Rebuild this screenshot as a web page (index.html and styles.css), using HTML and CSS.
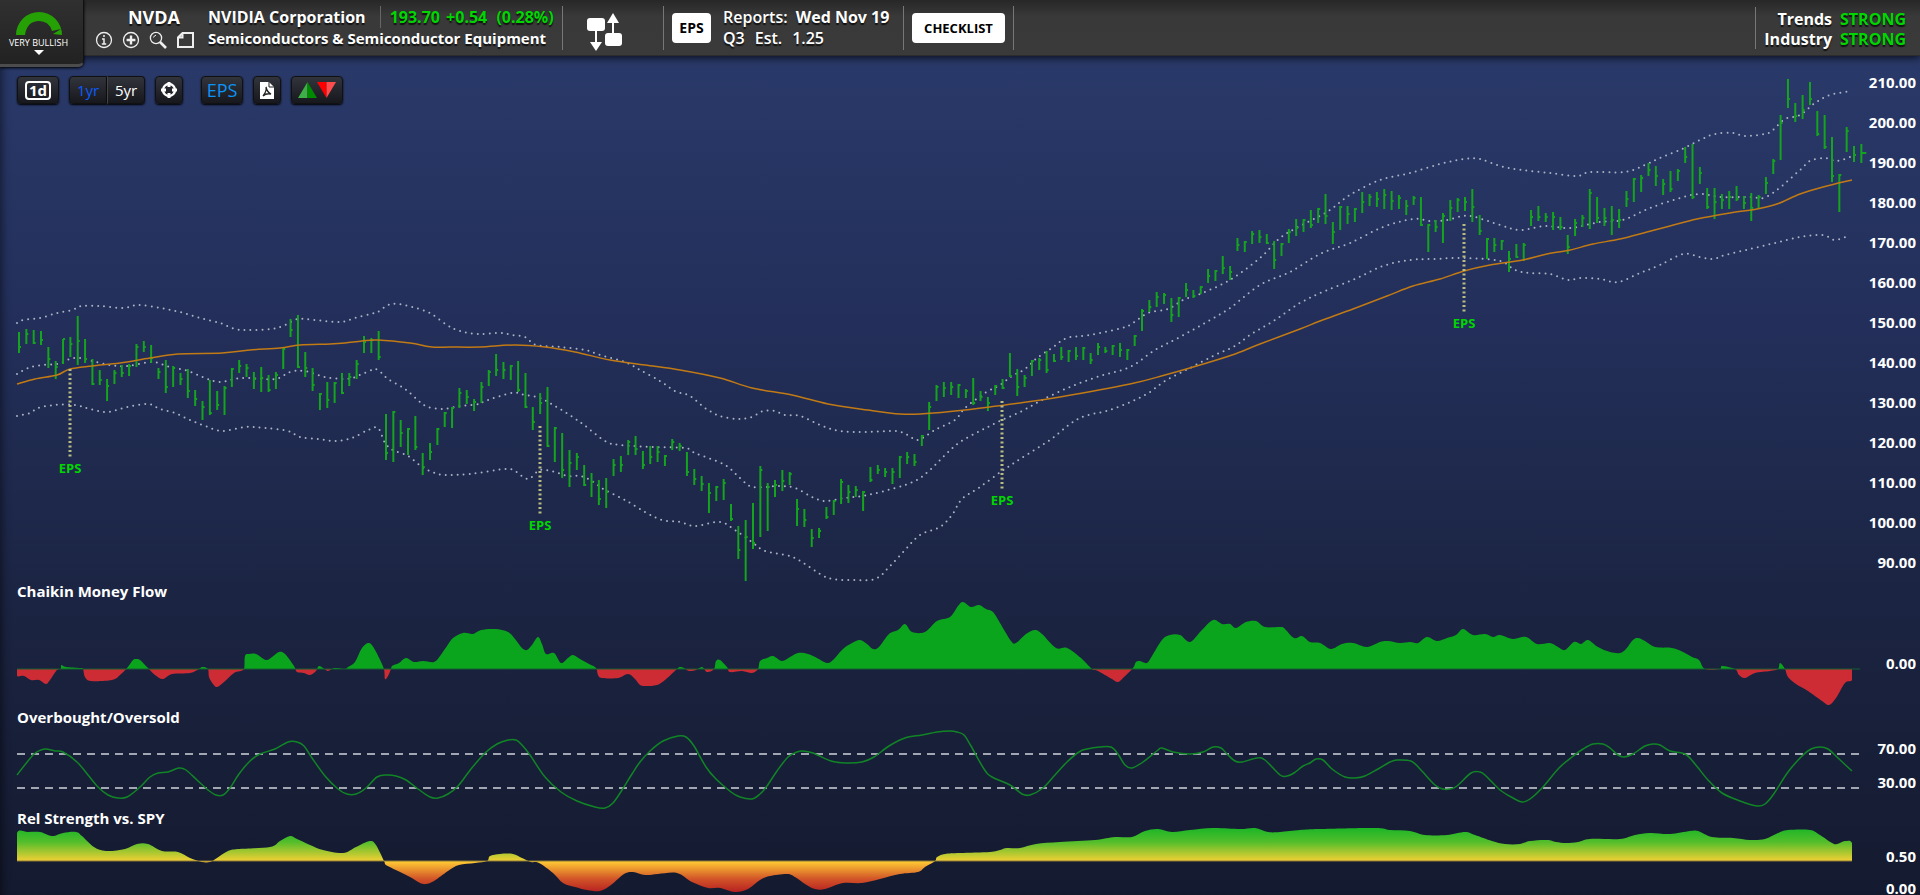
FILE: index.html
```html
<!DOCTYPE html>
<html lang="en">
<head>
  <meta charset="UTF-8" />
  <meta name="viewport" content="width=device-width, initial-scale=1.0"/>
  <title>NVDA - NVIDIA Corporation</title>
  <link rel="stylesheet" href="styles.css">
</head>
<body>
<header class="topbar">
  <button class="rating" type="button">
    <svg width="46" height="24" viewBox="0 0 46 24">
      <path d="M0 23A23 23 0 0 1 46 23L37 22L45 17L36 19Q33 9 23 9Q11 9 9 23Z" fill="#25a005"/>
    </svg>
    <span>VERY BULLISH</span>
    <i class="caret"></i>
  </button>
  <div class="symbol">
    <h1>NVDA</h1>
    <div class="symbol-icons">
      <button type="button" aria-label="Info">
        <svg viewBox="0 0 18 18"><circle cx="9" cy="9" r="7.5" stroke-width="1.3"/><path d="M9 4v2M7 8h2v5M6.800 13h4.400"/></svg>
      </button>
      <button type="button" aria-label="Add">
        <svg viewBox="0 0 18 18"><circle cx="9" cy="9" r="7.5" stroke-width="1.3"/><path d="M9 4.600v8.800M4.600 9h8.800" stroke-width="2.4"/></svg>
      </button>
      <button type="button" aria-label="Search">
        <svg viewBox="0 0 18 18"><circle cx="7" cy="7" r="5.6" stroke-width="1.3"/><path d="M4.500 6.500Q5 4.600 7 4.200" stroke-width="1"/><path d="M11 11l6 6" stroke-width="2.6"/></svg>
      </button>
      <button type="button" aria-label="Notes">
        <svg viewBox="0 0 18 18"><path d="M6.500 2H17v14H2V6.500zM6.500 2v4.500H2" stroke-width="2"/></svg>
      </button>
    </div>
  </div>
  <div class="company">
    <div class="line"><span class="name">NVIDIA Corporation</span><span class="price">193.70 <b>+0.54</b> (0.28%)</span></div>
    <div class="industry">Semiconductors &amp; Semiconductor Equipment</div>
  </div>
  <button class="swap" type="button" aria-label="Compare">
    <svg width="36" height="38" viewBox="0 0 36 38" fill="#fff">
      <rect x="0" y="5" width="18" height="13" rx="3"/><rect x="18" y="20" width="17" height="13" rx="3"/>
      <path d="M8 17h2v12h5l-6 9-6-9h5zM25 21h2V10h5L26 0l-6 10h5z"/>
    </svg>
  </button>
  <div class="reports">
    <button class="white-btn eps" type="button">EPS</button>
    <div>
      <div>Reports: <b>Wed Nov 19</b></div>
      <div class="est"><span>Q3</span><span>Est.</span><span>1.25</span></div>
    </div>
  </div>
  <div class="checklist"><button class="white-btn" type="button">CHECKLIST</button></div>
  <div class="strength">
    <div class="labels"><span>Trends</span><span>Industry</span></div>
    <div class="values"><span>STRONG</span><span>STRONG</span></div>
  </div>
</header>

<main class="charts">
  <div class="toolbar">
    <button type="button"><span class="boxed">1d</span></button>
    <div class="group">
      <button type="button" class="active">1yr</button>
      <button type="button">5yr</button>
    </div>
    <button type="button" class="small" aria-label="Crosshair">
      <svg width="18" height="18" viewBox="0 0 18 18"><circle cx="9" cy="9" r="6" fill="none" stroke="#fff" stroke-width="2.4"/><path d="M9 1v5M9 12v5M1 9h5M12 9h5" stroke="#fff" stroke-width="3"/></svg>
    </button>
    <button type="button" class="eps-toggle">EPS</button>
    <button type="button" class="small" aria-label="PDF">
      <svg width="14" height="17" viewBox="0 0 14 17"><path d="M0 0h9l5 5v12H0z" fill="#fff"/><path d="M9 0v5h5" fill="none" stroke="#222" stroke-width="1"/><path d="M3 14Q7 9 6 5Q7 10 11 12Q6 11 3 14" fill="none" stroke="#222" stroke-width="1.3"/></svg>
    </button>
    <button type="button" class="arrows" aria-label="Buy and sell signals">
      <svg width="38" height="16" viewBox="0 0 38 16"><path d="M9.500 0v16H0z" fill="#3fae49"/><path d="M9.500 0v16H19z" fill="#008a00"/><path d="M19 0h9.500v16z" fill="#f00"/><path d="M28.500 0H38l-9.500 16z" fill="#ff4c4c"/></svg>
    </button>
  </div>

  <section>
    <svg class="plot" id="price" viewBox="0 56 1920 526"></svg>
  </section>
  <section>
    <h2>Chaikin Money Flow</h2>
    <svg class="plot" id="flow" viewBox="0 602 1920 106">
      <linearGradient id="flow-fill" gradientUnits="userSpaceOnUse" x1="0" y1="602" x2="0" y2="736">
        <stop offset="0.5" stop-color="#0aa51c"/><stop offset="0.5" stop-color="#ce2c35"/>
      </linearGradient>
    </svg>
  </section>
  <section>
    <h2>Overbought/Oversold</h2>
    <svg class="plot" id="stoch" viewBox="0 728 1920 81"></svg>
  </section>
  <section>
    <h2>Rel Strength vs. SPY</h2>
    <svg class="plot" id="rel" viewBox="0 829 1920 66">
      <linearGradient id="rel-fill" gradientUnits="userSpaceOnUse" x1="0" y1="829" x2="0" y2="893">
        <stop offset="0" stop-color="#1fb628"/><stop offset="0.2" stop-color="#52bd2b"/>
        <stop offset="0.5" stop-color="#f2d035"/><stop offset="0.52" stop-color="#fcc433"/>
        <stop offset="0.78" stop-color="#d25428"/><stop offset="1" stop-color="#b51d20"/>
      </linearGradient>
    </svg>
  </section>
</main>

<script>
  // high, low, close of each day, one bar after another
  const bars = `332,353,347 329,344,334 330,344,343 331,345,340 347,368,359 361,379,367 339,364,339 337,357,344 316,365,341 339,363,359
    359,385,384 370,385,380 379,401,386 370,384,373 365,377,373 364,376,366 344,367,347 341,352,347 345,363,358 368,379,372
    360,393,387 366,387,368 373,385,379 369,398,391 390,406,399 401,420,407 380,415,413 391,410,405 386,415,388 368,387,369
    360,373,366 364,377,368 372,389,379 367,392,378 375,392,390 372,389,375 347,369,349 319,337,330 315,368,367 352,377,368
    368,391,385 393,410,394 382,408,400 382,403,383 373,394,393 373,386,377 360,379,364 336,353,342 338,353,340 331,360,357
    414,460,453 411,462,412 420,447,433 428,455,429 416,450,447 453,475,467 443,460,452 428,445,429 412,427,413 407,428,408
    388,408,393 390,404,397 399,411,402 382,403,387 370,386,372 354,376,370 362,379,370 365,380,366 361,392,390 373,408,407
    407,430,422 393,414,403 387,447,446 427,462,428 433,478,470 450,487,463 453,470,457 465,486,485 473,497,482 480,505,499
    478,508,492 459,476,465 456,472,465 440,455,442 436,455,449 451,469,465 446,464,457 446,462,452 455,466,456 439,450,442
    443,451,446 452,476,472 469,485,479 476,491,484 483,513,493 486,501,487 479,500,483 504,521,519 526,559,550 520,581,537
    503,549,543 466,537,470 483,531,487 480,497,485 470,491,481 472,485,474 499,526,509 509,527,520 529,547,538 528,538,531
    507,519,517 500,515,501 479,504,482 485,503,492 486,497,490 491,511,492 467,482,480 465,474,470 468,477,472 468,484,472
    456,478,457 452,464,457 454,466,462 435,446,436 402,430,407 385,401,387 382,397,388 382,395,387 384,398,385 389,398,391
    378,405,403 391,401,397 397,411,403 385,395,386 379,389,388 353,377,376 369,396,387 375,387,378 360,376,361 358,370,360
    351,373,370 354,362,361 347,360,357 350,362,351 347,360,356 347,360,348 353,364,360 343,355,347 347,353,351 345,355,346
    343,357,350 349,360,350 335,346,336 309,331,311 300,312,307 292,307,297 293,304,295 298,322,315 297,317,298 283,297,290
    290,298,296 286,294,287 269,283,276 270,281,271 256,274,268 266,280,272 238,251,245 241,252,242 231,244,234 230,243,237
    234,244,243 241,269,260 243,256,244 229,243,232 219,236,228 219,232,220 210,228,225 208,223,209 194,224,216 222,244,232
    206,230,207 206,224,214 208,222,209 192,213,202 194,206,197 192,207,199 189,209,195 191,210,201 195,209,198 200,215,206
    196,205,198 197,226,225 224,252,225 220,232,227 213,243,216 200,221,208 198,212,200 197,211,202 189,222,207 215,235,231
    238,259,239 238,252,245 240,250,241 251,272,259 244,258,257 243,261,245 210,226,217 206,221,217 213,222,217 212,230,217
    217,230,227 235,254,247 219,236,223 215,227,218 189,229,193 197,223,218 208,226,218 206,235,220 209,228,220 191,207,199
    178,202,179 175,192,178 163,176,170 166,186,176 179,195,184 171,192,189 169,181,171 147,163,157 144,199,197 167,184,173
    188,209,207 188,219,202 194,209,200 191,209,197 186,201,199 196,209,203 193,221,208 195,208,197 177,194,183 159,174,161
    115,160,123 79,108,99 103,122,116 95,119,110 82,105,99 111,136,134 115,149,147 137,182,176 174,212,175 127,152,131
    146,162,155 144,163,153`;

  const average = `17,384 35,379 57,375 70,369 92,366 120,363 150,358 178,354 222,353 250,350 280,348 300,345 330,344 345,343 362,341 378,340
    410,343 432,347 450,347 480,347 515,345 545,347 575,352 610,360 645,365 680,370 720,378 752,388 792,395 828,404 868,410 900,414 920,414
    965,410 1020,403 1060,397 1130,384 1165,375 1200,365 1232,355 1260,344 1300,329 1320,321 1353,309 1387,296 1413,286 1440,279 1464,271
    1490,265 1523,260 1547,254 1570,250 1593,244 1620,239 1647,232 1670,226 1697,219 1730,213 1757,209 1777,204 1800,194 1823,187 1852,180`;

  const bands = [
    `17,323 23,320 40,318 57,313 72,310 82,306 100,306 123,308 138,305 160,308 180,312 200,318 220,323 235,329 248,330 272,329 285,325
    298,319 315,320 340,322 355,318 370,314 378,312 388,305 398,304 412,307 430,313 447,325 460,331 478,334 500,333 512,335 525,337 536,345
    560,347 585,350 600,355 625,362 640,370 660,381 675,391 690,396 705,408 720,416 738,419 752,417 763,411 775,411 785,415 800,416 820,425
    840,431 865,432 895,431 908,435 918,440 935,430 955,420 965,408 985,393 1000,385 1012,376 1025,369 1037,358 1052,348 1067,338 1090,335
    1122,328 1133,323 1148,313 1168,309 1183,300 1200,294 1230,280 1260,258 1280,238 1300,226 1327,212 1350,195 1380,180 1410,173 1440,164
    1465,159 1480,159 1500,166 1522,170 1550,173 1577,176 1590,172 1625,172 1645,165 1660,158 1682,149 1700,140 1715,134 1733,133 1745,136
    1765,134 1773,130 1785,119 1800,115 1815,103 1830,95 1852,91`,
    `17,374 28,368 42,365 57,364 70,359 80,358 92,361 110,365 128,366 152,362 170,367 188,371 205,378 220,382 242,378 275,379 290,372
    305,371 325,377 347,379 360,375 372,370 378,370 388,379 405,389 420,402 428,407 443,409 460,406 480,404 485,401 512,393 525,395 540,398
    555,406 580,422 605,441 620,445 655,447 685,448 695,453 725,465 740,478 753,487 780,486 795,488 812,497 825,501 845,498 868,495 895,488
    915,481 930,470 945,455 960,442 980,431 1000,421 1022,411 1042,400 1070,387 1100,376 1130,367 1155,350 1180,337 1210,320 1230,308
    1260,285 1290,272 1320,254 1350,243 1383,227 1413,219 1430,221 1447,220 1463,216 1475,217 1500,225 1520,230 1545,226 1570,228 1600,222
    1623,220 1650,208 1680,198 1700,194 1720,197 1750,197 1763,198 1777,190 1800,170 1810,161 1825,158 1837,161 1850,157`,
    `17,416 30,413 38,408 55,405 75,405 90,409 107,412 127,407 148,404 160,409 175,413 190,420 205,426 222,431 245,427 265,428 288,431
    300,437 318,439 335,441 352,438 368,430 378,428 385,443 393,450 408,456 422,467 435,473 445,475 470,474 505,469 515,471 528,479 540,470
    555,472 568,476 580,476 592,481 605,490 625,500 645,512 662,520 680,522 695,526 720,522 735,530 752,542 765,551 790,556 805,564 820,574
    832,579 850,580 875,579 890,566 905,550 920,535 940,527 952,515 962,499 980,487 1002,471 1020,459 1050,440 1070,424 1085,416 1110,410
    1135,400 1150,392 1165,381 1190,368 1215,355 1235,346 1250,335 1275,320 1300,303 1325,291 1355,279 1383,266 1410,260 1433,259 1465,258
    1500,261 1515,270 1530,273 1550,274 1568,280 1580,278 1600,279 1618,282 1640,273 1660,265 1683,254 1700,257 1713,259 1725,255 1750,249
    1775,243 1800,237 1823,235 1835,240 1850,235`
  ];

  const flow = `17,669 17,676 24,676 31,680 39,680 46,684 50,680 57,670 61,669 61,665 66,667 80,668 83,669 85,677 91,681 112,680 120,675
    127,668 133,660 136,659 140,660 148,668 155,675 163,679 172,674 190,673 199,669 202,667 208,669 209,677 213,684 217,687 224,682
    234,673 244,669 245,656 249,654 256,654 266,660 272,657 279,652 285,654 294,666 297,672 304,673 310,675 316,671 319,666 326,670
    328,671 335,668 345,669 348,667 355,662 362,648 369,643 375,650 384,669 385,679 388,676 391,669 392,666 399,663 406,658 414,662
    423,661 434,662 440,656 447,646 453,638 463,633 473,634 481,630 495,629 508,632 515,639 522,648 527,650 532,645 538,637 542,644
    546,654 554,653 561,663 568,658 573,655 580,659 589,664 596,668 598,675 602,678 618,678 628,674 635,679 640,685 646,686 657,685
    665,680 677,669 680,667 684,668 689,671 696,670 702,667 707,672 714,669 716,661 720,660 727,667 730,672 742,671 752,673 758,669
    760,661 767,658 773,656 782,661 790,657 798,653 808,654 817,658 827,663 833,660 843,649 852,643 860,640 867,644 873,649 879,647
    889,634 898,630 905,624 912,632 925,632 937,621 950,617 958,606 963,602 971,607 979,605 986,609 993,612 1000,623 1011,641 1016,643
    1026,634 1035,630 1042,634 1056,648 1067,648 1081,658 1092,669 1098,671 1112,679 1118,682 1124,677 1133,668 1136,662 1140,661
    1147,663 1152,656 1162,640 1170,635 1180,635 1190,642 1201,631 1213,620 1222,624 1230,624 1236,628 1246,622 1256,621 1265,627
    1280,627 1284,628 1294,638 1302,636 1310,642 1320,643 1331,649 1342,644 1353,643 1367,647 1380,642 1388,641 1400,643 1410,642
    1418,643 1427,637 1437,641 1447,638 1456,635 1463,629 1473,635 1485,634 1493,637 1500,635 1513,639 1526,637 1537,644 1550,643
    1558,647 1565,650 1574,642 1581,644 1588,640 1598,647 1610,652 1620,653 1626,649 1633,640 1638,638 1645,641 1655,647 1672,648
    1683,652 1692,657 1699,660 1705,669 1720,669 1722,666 1735,669 1739,675 1745,678 1755,673 1770,671 1778,669 1780,663 1785,669
    1788,677 1796,684 1808,691 1822,701 1829,705 1836,698 1845,683 1852,680 1852,669`;

  const stoch = `17,775 24,766 34,754 41,750 46,749 55,751 63,752 77,762 88,775 98,787 108,795 118,798 127,797 139,788 150,777 158,773
    168,772 179,768 186,770 197,780 208,790 216,795 223,795 230,788 239,774 250,761 260,754 275,749 288,742 297,742 304,746 312,758
    325,776 338,789 347,794 356,794 366,788 377,777 387,775 396,776 406,780 418,789 430,797 438,798 448,794 458,786 471,769 485,753
    497,744 508,740 516,740 522,745 530,755 545,777 561,792 577,801 595,807 605,808 613,803 622,790 632,774 640,762 650,751 663,741
    678,736 686,737 694,746 706,767 716,779 731,792 740,797 752,799 760,794 767,786 777,771 788,757 797,752 803,751 813,753 831,761
    846,763 862,762 874,757 889,746 905,738 922,735 937,732 950,731 957,732 964,735 971,746 984,769 992,777 1010,785 1022,794 1030,795
    1043,788 1055,775 1067,762 1079,752 1087,749 1100,747 1111,747 1118,754 1125,765 1132,768 1143,762 1158,750 1162,748 1173,752
    1190,754 1203,752 1213,747 1221,748 1227,754 1235,761 1242,762 1257,758 1265,760 1280,775 1287,776 1294,773 1303,766 1310,763
    1316,759 1323,760 1332,769 1345,777 1355,778 1365,776 1378,769 1390,762 1397,760 1411,761 1420,769 1435,785 1443,789 1450,789
    1457,786 1471,773 1480,772 1486,776 1500,790 1513,798 1522,802 1530,799 1542,788 1559,768 1572,757 1583,749 1593,744 1603,744
    1610,748 1618,755 1624,757 1633,754 1645,746 1653,744 1660,745 1670,751 1685,754 1695,764 1708,780 1722,793 1740,801 1757,806
    1765,804 1773,795 1788,772 1802,756 1811,749 1820,747 1828,749 1838,758 1852,771`;

  const rel = `17,861 17,833 28,832 40,832 48,835 54,836 63,833 76,832 82,836 94,847 106,851 125,849 137,844 148,844 162,851 178,852
    190,858 202,862 210,862 217,858 228,851 238,849 270,847 280,841 290,836 297,839 310,845 323,850 343,853 356,847 370,841 376,845
    384,861 386,865 398,871 410,877 420,883 426,884 434,881 448,871 459,865 475,863 487,861 490,856 500,854 513,854 522,858 531,862
    539,863 553,873 563,883 575,887 587,890 600,891 611,885 624,874 633,872 645,875 658,874 677,873 692,882 708,888 720,888 735,892
    748,889 760,880 770,876 787,874 795,877 805,884 815,889 825,889 843,883 862,883 880,879 900,874 918,872 925,867 935,861 937,857
    945,854 960,853 990,852 1000,850 1007,848 1020,848 1036,844 1060,842 1095,840 1115,837 1132,837 1145,831 1158,829 1172,832
    1190,830 1213,828 1240,829 1255,828 1268,832 1280,832 1300,830 1320,829 1375,828 1390,830 1410,831 1425,835 1447,835 1465,832
    1475,835 1492,841 1505,844 1520,844 1530,841 1547,840 1556,842 1566,843 1578,842 1590,839 1620,839 1635,835 1650,833 1670,834
    1690,831 1698,831 1712,837 1733,838 1750,840 1765,839 1778,833 1788,830 1810,830 1820,835 1832,843 1837,844 1845,841 1852,843 1852,861`;

  const parse = text => text.trim().split(/\s+/).map(p => p.split(',').map(Number));

  function add(id, tag, attrs, text) {
    const el = document.createElementNS('http://www.w3.org/2000/svg', tag);
    for (const key in attrs) el.setAttribute(key, attrs[key]);
    if (text) el.textContent = text;
    document.getElementById(id).appendChild(el);
  }

  // smooth line through all the points
  function curve(text) {
    const p = parse(text);
    let d = 'M' + p[0];
    for (let i = 0; i < p.length - 1; i++) {
      const a = p[i - 1] || p[i], b = p[i], c = p[i + 1], e = p[i + 2] || c;
      const limit = x => Math.min(Math.max(x, b[0]), c[0]);
      d += `C${limit(b[0] + (c[0] - a[0]) / 6)},${b[1] + (c[1] - a[1]) / 6} ${limit(c[0] - (e[0] - b[0]) / 6)},${c[1] - (e[1] - b[1]) / 6} ${c}`;
    }
    return d;
  }

  function label(id, y, text) {
    add(id, 'text', { x: 1916, y: y + 6, class: 'axis' }, text);
  }

  // price panel
  bands.forEach(b => add('price', 'path', { d: curve(b), class: 'band' }));
  parse(bars).forEach(([high, low, close], i, all) => {
    const x = 19 + i * 7.34;
    const tick = i === all.length - 1 ? 5 : 2;
    add('price', 'path', { d: `M${x} ${high}V${low}`, class: 'bar' });
    add('price', 'path', { d: `M${x} ${close}h${tick}`, class: 'tick' });
  });
  add('price', 'path', { d: curve(average), class: 'average' });
  [[70, 369], [540, 426], [1002, 401], [1464, 224]].forEach(([x, y]) => {
    add('price', 'path', { d: `M${x} ${y}v88`, class: 'eps-line' });
    add('price', 'text', { x: x, y: y + 104, class: 'eps-mark' }, 'EPS');
  });
  for (let i = 0; i < 13; i++) label('price', 82 + i * 40, (210 - i * 10).toFixed(2));

  // indicator panels
  add('flow', 'path', { d: curve(flow), fill: 'url(#flow-fill)' });
  add('flow', 'path', { d: 'M17 669H1860', class: 'zero' });
  label('flow', 663, '0.00');

  add('stoch', 'path', { d: 'M17 754H1860M17 788H1860', class: 'dashed' });
  add('stoch', 'path', { d: curve(stoch), class: 'stoch' });
  label('stoch', 748, '70.00');
  label('stoch', 782, '30.00');

  add('rel', 'path', { d: curve(rel), fill: 'url(#rel-fill)' });
  add('rel', 'path', { d: 'M17 861H1852', class: 'half' });
  label('rel', 856, '0.50');
  label('rel', 888, '0.00');
</script>
</body>
</html>
```
FILE: styles.css
```css
* {
  box-sizing: border-box;
}
body {
  margin: 0;
  font-family: 'Open Sans', 'Noto Sans', sans-serif;
  color: #fff;
  background: #151a30;
}
button {
  font-family: inherit;
  color: inherit;
  border: none;
  background: none;
  padding: 0;
  cursor: pointer;
}
h1, h2 {
  margin: 0;
}
b {
  font-weight: 700;
}
svg {
  display: block;
}

/* top bar */
.topbar {
  position: relative;
  z-index: 2;
  display: flex;
  align-items: center;
  height: 56px;
  padding-left: 95px;
  background: linear-gradient(#272727, #393939 30%, #3a3a3a);
  border-bottom: 1px solid #2c2c2c;
  box-shadow: 0 2px 8px rgba(0, 0, 0, 0.7);
  font-size: 15px;
  line-height: 20px;
  white-space: nowrap;
  text-shadow: 0 2px 1px #111;
}
.rating {
  position: absolute;
  left: 0;
  top: 0;
  width: 84px;
  height: 67px;
  padding: 12px 6px 0 0;
  display: flex;
  flex-direction: column;
  align-items: center;
  background: linear-gradient(#303030, #222);
  border-bottom: 3px solid #4c4c4c;
  border-right: 1px solid #111;
  border-radius: 0 0 6px 0;
  box-shadow: 0 1px 3px #000;
  font-size: 9px;
  line-height: 14px;
}
.caret {
  border: 5px solid transparent;
  border-top-color: #fff;
  border-bottom: none;
}
.symbol {
  width: 113px;
  text-align: center;
}
.symbol h1 {
  padding-left: 5px;
  font-size: 18px;
  line-height: 22px;
}
.symbol-icons {
  display: flex;
  gap: 9px;
  padding-top: 3px;
}
.symbol-icons button {
  width: 18px;
}
.symbol-icons svg {
  width: 18px;
  height: 18px;
  fill: none;
  stroke: #eee;
  stroke-width: 1.5;
}
.company {
  height: 44px;
  width: 355px;
  border-right: 1px solid #777;
  font-weight: 700;
}
.company .line {
  display: flex;
  font-size: 16px;
  line-height: 22px;
}
.price {
  margin-left: 14px;
  padding-left: 9px;
  color: #00d600;
  border-left: 1px solid #666;
}
.price b {
  margin: 0 5px 0 2px;
}
.swap {
  width: 100px;
  padding: 8px 0 0 24px;
}
.reports {
  display: flex;
  align-items: center;
  gap: 12px;
  width: 241px;
  height: 44px;
  padding-left: 8px;
  border-left: 1px solid #777;
  border-right: 1px solid #777;
  font-size: 16px;
  font-weight: 600;
  line-height: 21px;
}
.reports b {
  margin-left: 4px;
}
.est {
  display: flex;
  gap: 10px;
}
.white-btn {
  width: 93px;
  height: 30px;
  background: #fff;
  border-radius: 4px;
  color: #000;
  font-size: 13px;
  font-weight: 700;
}
.white-btn.eps {
  width: 39px;
  font-size: 14px;
}
.checklist {
  display: flex;
  align-items: center;
  height: 44px;
  padding: 0 8px;
  border-right: 1px solid #777;
}
.strength {
  display: flex;
  gap: 8px;
  margin-left: auto;
  padding: 2px 14px 0 8px;
  border-left: 1px solid #777;
  font-size: 16px;
  font-weight: 700;
}
.labels, .values {
  display: flex;
  flex-direction: column;
  text-align: right;
}
.values {
  color: #00d600;
}

/* chart area */
.charts {
  position: relative;
  background: linear-gradient(#293969, #232f5a 32%, #1b2442 65%, #141a2f);
  box-shadow: inset 8px 0 8px -6px rgba(0, 0, 0, 0.5);
}
.charts h2 {
  padding: 0 0 2px 17px;
  font-size: 15px;
  line-height: 18px;
}
.plot {
  width: 100%;
  height: auto;
  overflow: visible;
}
.toolbar {
  position: absolute;
  left: 17px;
  top: 20px;
  display: flex;
  gap: 10px;
}
.toolbar button {
  display: flex;
  align-items: center;
  justify-content: center;
  width: 42px;
  height: 28px;
  background: linear-gradient(#32343c, #17181d);
  border: 1px solid #111;
  border-radius: 4px;
  box-shadow: 0 1px 2px #000;
  font-size: 15px;
}
.toolbar .group {
  display: flex;
}
.group button {
  width: 38px;
}
.group button:first-child {
  border-radius: 4px 0 0 4px;
}
.group button:last-child {
  border-radius: 0 4px 4px 0;
  border-left: 1px solid #444;
}
.group .active {
  color: #0a5cff;
}
.toolbar .small {
  width: 28px;
}
.toolbar .arrows {
  width: 52px;
}
.toolbar .eps-toggle {
  margin-left: 8px;
  color: #0a94f5;
  font-size: 18px;
}
.boxed {
  width: 26px;
  border: 2px solid #fff;
  border-radius: 4px;
  font-weight: 700;
  line-height: 15px;
}

/* chart drawing */
.band, .bar, .tick, .average, .eps-line, .zero, .dashed, .stoch, .half {
  fill: none;
}
.band {
  stroke: #aab2c4;
  stroke-width: 2;
  stroke-linecap: round;
  stroke-dasharray: 0 6;
}
.bar, .tick {
  stroke: #15a41e;
  stroke-width: 2;
}
.average {
  stroke: #c17a14;
  stroke-width: 1.5;
}
.eps-line {
  stroke: #b9bc80;
  stroke-width: 3;
  stroke-dasharray: 2 2.5;
}
.eps-mark {
  fill: #00d600;
  font-size: 13px;
  font-weight: 700;
  text-anchor: middle;
}
.axis {
  fill: #fff;
  font-size: 15px;
  font-weight: 700;
  text-anchor: end;
}
.zero {
  stroke: #14612f;
}
.dashed {
  stroke: #a2a6b2;
  stroke-width: 2;
  stroke-dasharray: 8 6;
}
.stoch {
  stroke: #118526;
  stroke-width: 1.5;
}
.half {
  stroke: #8c7838;
}
```
